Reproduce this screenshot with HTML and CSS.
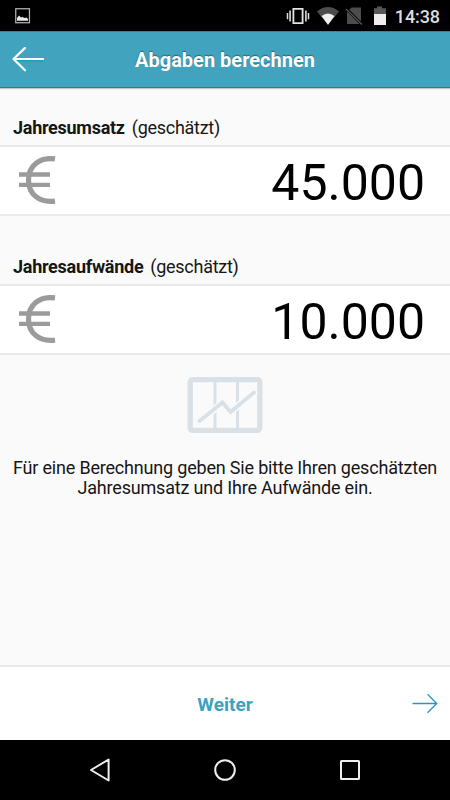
FILE: index.html
```html
<!DOCTYPE html>
<html lang="de">
<head>
<meta charset="utf-8">
<title>Abgaben berechnen</title>
<link rel="stylesheet" href="styles.css">
</head>
<body>
<div class="screen">
  <div class="status">
    <svg class="picture" width="16" height="16" viewBox="0 0 16 16"><rect x=".75" y=".75" width="13.7" height="14" fill="none" stroke="#bbb" stroke-width="1.2"/><path d="M2 12.700V10l2-2.500 2 2 1.500-.5 2 1 2-.5 1.500 1.500v1.700z" fill="#e8e8e8"/></svg>
    <svg class="signals" width="102" height="20" viewBox="0 0 102 20">
      <path d="M8.400 2.800h9.200v14.400H8.400z" fill="none" stroke="#e4e4e4" stroke-width="1.800"/>
      <path d="M5.100 4.500v11M20.900 4.500v11" stroke="#ddd" stroke-width="1.600"/><path d="M2.500 7v6.200M23.500 7v6.200" stroke="#ddd" stroke-width="1.500"/>
      <path d="M32 5.400Q43-3.400 54 5.400L43 19z" fill="#4c4c4c"/><path d="M36.500 10.100Q43 5 49.500 10.100L43 18.800z" fill="#f0f0f0"/>
      <path d="M62 6l4.500-4.500H76V18H62z" fill="#4c4c4c"/><path d="M60 1.500l17 17" stroke="#000" stroke-width="2.800"/><path d="M61 3l16 15.500" stroke="#555" stroke-width="1.300"/>
      <path d="M89 2.200h3V.5h5v1.700h3.900V9H89z" fill="#585858"/><path d="M89 8h12v11H89z" fill="#eee"/>
    </svg>
    <span class="clock">14:38</span>
  </div>
  <header class="header">
    <svg width="34" height="26" viewBox="0 0 34 26"><path d="M3 13.700h29" stroke="#159fbd" stroke-width="1.400"/><path d="M32 12H2.500M14 .9L2.500 12l11.500 11.300" fill="none" stroke="#fff" stroke-width="2.200" stroke-linecap="round" stroke-linejoin="round"/></svg>
    <h1>Abgaben berechnen</h1>
  </header>
  <main class="main">
    <div class="label"><b>Jahresumsatz</b><span>(geschätzt)</span></div>
    <div class="amount">
      <svg width="37" height="50" viewBox="0 0 37 50"><path d="M36 2.900C20 .8 9.500 10 9.500 24s10.500 23.200 26.500 21.100" fill="none" stroke="#9b9b9b" stroke-width="5.200"/><path d="M0 18.500h31M0 28.800h31" stroke="#9b9b9b" stroke-width="4.300"/></svg>
      <span>45.000</span>
    </div>
    <div class="label second"><b>Jahresaufwände</b><span>(geschätzt)</span></div>
    <div class="amount">
      <svg width="37" height="50" viewBox="0 0 37 50"><path d="M36 2.900C20 .8 9.500 10 9.500 24s10.500 23.200 26.500 21.100" fill="none" stroke="#9b9b9b" stroke-width="5.200"/><path d="M0 18.500h31M0 28.800h31" stroke="#9b9b9b" stroke-width="4.300"/></svg>
      <span>10.000</span>
    </div>
    <div class="hint">
      <svg width="76" height="57" viewBox="0 0 76 57"><rect x="3.200" y="2.600" width="69.600" height="50.800" rx="2.500" fill="none" stroke="#d9e1e7" stroke-width="5.400"/><path d="M28 3v50M50.500 3v50" stroke="#d9e1e7" stroke-width="3"/><path d="M12.500 44L35.500 25.500l8 9.500L67 15.500" fill="none" stroke="#fafafa" stroke-width="7" stroke-linecap="round"/><path d="M12.500 44L35.500 25.500l8 9.500L67 15.500" fill="none" stroke="#d9e1e7" stroke-width="3.800" stroke-linecap="round"/></svg>
      <p>Für eine Berechnung geben Sie bitte Ihren geschätzten<br>Jahresumsatz und Ihre Aufwände ein.</p>
    </div>
  </main>
  <footer class="next">
    <span>Weiter</span>
    <svg width="26" height="20" viewBox="0 0 26 20"><path d="M.5 9.500h24M15.500.3L24.700 9.500l-9.200 9.200" fill="none" stroke="#259ab5" stroke-width="1.300"/></svg>
  </footer>
  <nav class="nav">
    <svg width="22" height="26" viewBox="0 0 22 26"><path d="M20.600 2.500v21L3 13z" fill="none" stroke="#eee" stroke-width="2" stroke-linejoin="round"/></svg>
    <svg width="22" height="22" viewBox="0 0 22 22"><circle cx="11" cy="11" r="9.800" fill="none" stroke="#eee" stroke-width="2"/></svg>
    <svg width="20" height="20" viewBox="0 0 20 20"><rect x="1" y="1" width="18" height="18" rx=".5" fill="none" stroke="#eee" stroke-width="2"/></svg>
  </nav>
</div>
</body>
</html>
```
FILE: styles.css
```css
* { box-sizing: border-box; }
body { margin: 0; font-family: Roboto, sans-serif; color: #161616; }
svg { display: block; flex: none; }
.screen { width: 450px; height: 800px; display: flex; flex-direction: column; background: #fafafa; }
.status { height: 31px; background: #000; display: flex; align-items: flex-start; padding: 6px 10px 0 15px; }
.picture { margin-top: 2px; }
.signals { margin-left: auto; }
.clock { width: 45px; margin-left: 8px; font-size: 18px; line-height: 21px; font-weight: 500; color: #dedede; white-space: nowrap; display: flex; justify-content: flex-end; letter-spacing: -.1px; }
.header { height: 57px; background: #42a3bf; border-top: 1px solid #32879f; border-bottom: 1px solid #526f79; box-shadow: 0 1px 1px #c6c6c6; display: grid; grid-template-columns: 34px 1fr 34px; align-items: center; padding: 0 11px; }
.header h1 { margin: 0; text-align: center; color: #fff; font-size: 20px; line-height: 24px; font-weight: 700; text-shadow: 0 -1px 1px #286879; white-space: nowrap; }
.main { flex: 1; }
.label { height: 57px; padding: 29px 13px 0; font-size: 18px; line-height: 21px; display: flex; gap: 7px; white-space: nowrap; letter-spacing: -.27px; }
.label.second { height: 68px; padding-top: 40px; }
.amount { height: 71px; background: #fff; border-top: 2px solid #e9e9e9; border-bottom: 2px solid #e9e9e9; display: flex; justify-content: space-between; align-items: center; padding: 0 25px 0 19px; }
.amount span { font-size: 50px; line-height: 60px; color: #000; padding-top: 5px; }
.hint { display: flex; flex-direction: column; align-items: center; padding-top: 22px; }
.hint p { margin: 24px 0 0; font-size: 18px; line-height: 20px; text-align: center; white-space: nowrap; letter-spacing: -.19px; }
.next { height: 75px; background: #fff; border-top: 2px solid #e9e9e9; display: grid; grid-template-columns: 26px 1fr 26px; align-items: center; padding: 0 12px; }
.next span { grid-column: 2; padding-top: 1px; text-align: center; font-size: 19px; font-weight: 700; color: #3ba3bf; }
.nav { height: 60px; background: #000; display: flex; justify-content: space-between; align-items: center; padding: 0 90px 0 88px; }
```
